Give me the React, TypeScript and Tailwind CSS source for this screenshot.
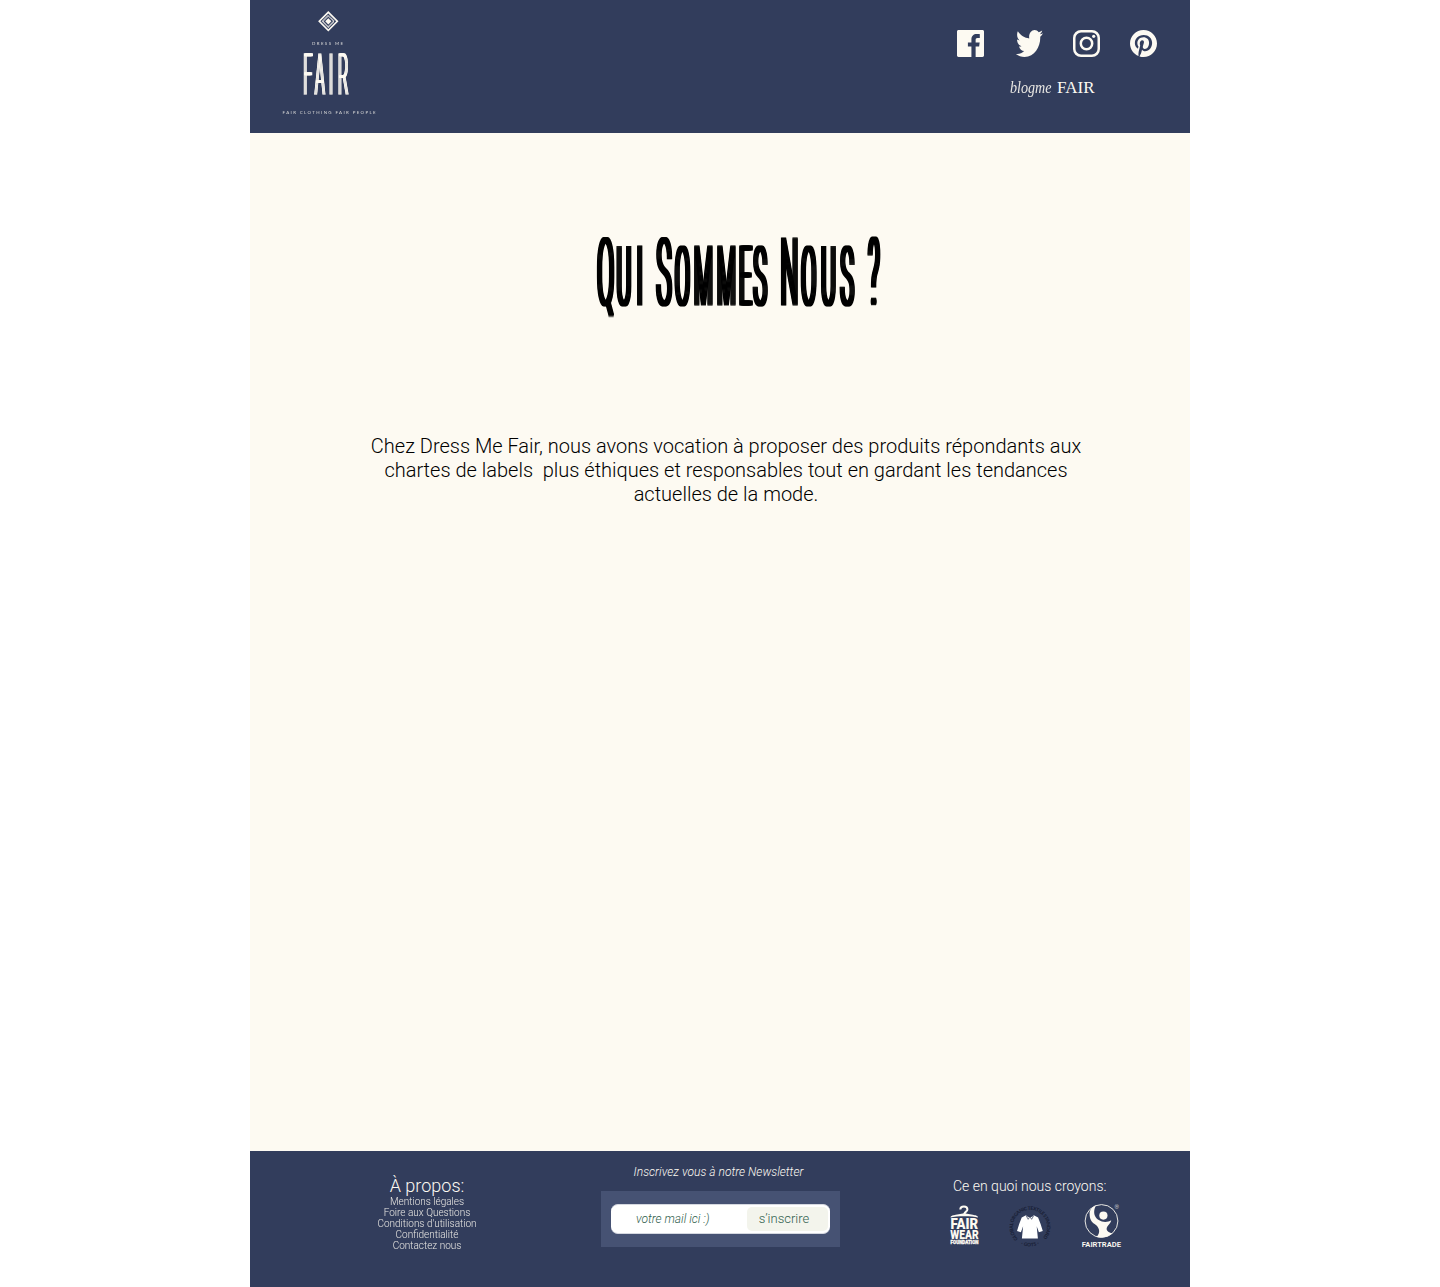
import type { ReactNode } from "react";
import { FaPinterest } from "react-icons/fa";

const LINKS = [
  "Mentions légales",
  "Foire aux Questions",
  "Conditions d'utilisation",
  "Confidentialité",
  "Contactez nous",
];

/* Narrow display lettering: thin glyphs squeezed horizontally, then widened by a horizontal smear. */
const SX = 0.26;
const at = (...xs: number[]) => xs.map((x) => (x / SX).toFixed(1)).join(" ");

function Title() {
  return (
    <h1 className="h-[90px] w-[300px]">
      <svg viewBox="0 0 300 90" className="size-full overflow-visible font-['Roboto'] font-thin uppercase">
        <filter id="smear" filterUnits="userSpaceOnUse" x="0" y="0" width="300" height="95">
          <feOffset in="SourceGraphic" dx="-2" result="a" />
          <feOffset in="SourceGraphic" dx="-1" result="b" />
          <feOffset in="SourceGraphic" dx="1" result="c" />
          <feOffset in="SourceGraphic" dx="2" result="d" />
          <feMerge>
            <feMergeNode in="a" />
            <feMergeNode in="b" />
            <feMergeNode in="SourceGraphic" />
            <feMergeNode in="c" />
            <feMergeNode in="d" />
          </feMerge>
        </filter>
        <g filter="url(#smear)">
          <text transform="translate(0 73.5) scale(0.26 1)" fill="#000" stroke="#000" strokeWidth="3">
            <tspan fontSize="91" x={at(8.7)}>Q</tspan>
            <tspan fontSize="80" x={at(28.1, 48.1)}>ui</tspan>
            <tspan fontSize="91" x={at(68)}>S</tspan>
            <tspan fontSize="80" x={at(86.5, 105.4, 128.4, 150.4, 165)}>ommes</tspan>
            <tspan fontSize="91" x={at(192.1)}>N</tspan>
            <tspan fontSize="80" x={at(212.8, 232.5, 252)}>ous</tspan>
            <tspan fontSize="91" x={at(279.7)}>?</tspan>
          </text>
        </g>
      </svg>
    </h1>
  );
}

function BrandLogo() {
  return (
    <svg viewBox="0 0 100 110" className="h-[110px] w-[100px] font-['Lato']" fill="#fdfaf2">
      <filter id="smear-small" filterUnits="userSpaceOnUse" x="0" y="40" width="100" height="55">
        <feOffset in="SourceGraphic" dx="-1" result="a" />
        <feOffset in="SourceGraphic" dx="1" result="b" />
        <feMerge>
          <feMergeNode in="a" />
          <feMergeNode in="SourceGraphic" />
          <feMergeNode in="b" />
        </feMerge>
      </filter>
      <g transform="translate(48.3 13.3) rotate(45)" stroke="#fdfaf2" fill="none">
        <rect x="-6.4" y="-6.4" width="12.8" height="12.8" strokeWidth="1.6" />
        <rect x="-4" y="-4" width="8" height="8" strokeWidth="1.4" strokeDasharray="1 0.4" />
        <rect x="-2.2" y="-2.2" width="4.4" height="4.4" fill="#fdfaf2" stroke="none" />
      </g>
      <text x="32" y="36.6" fontSize="4.4" textLength="31" opacity="0.8">DRESS ME</text>
      <g filter="url(#smear-small)">
        <text
          transform="translate(0 85.700) scale(0.28 1)"
          className="font-['Roboto'] font-thin"
          fontSize="55"
          stroke="#fdfaf2"
          strokeWidth="1.4"
          x="84 126 175 208"
        >
          FAIR
        </text>
      </g>
      <text x="2.6" y="106" fontSize="4.4" textLength="93" opacity="0.8">FAIR CLOTHING FAIR PEOPLE</text>
    </svg>
  );
}

function Facebook() {
  return (
    <svg viewBox="0 0 24 24" className="size-[27px]" fill="currentColor">
      <path d="M22.676 0H1.324C.593 0 0 .593 0 1.324v21.352C0 23.408.593 24 1.324 24h11.494v-9.294H9.689v-3.621h3.129V8.41c0-3.099 1.894-4.785 4.659-4.785 1.325 0 2.464.097 2.796.141v3.24h-1.921c-1.5 0-1.792.721-1.792 1.771v2.311h3.584l-.465 3.63H16.56V24h6.115c.733 0 1.325-.592 1.325-1.324V1.324C24 .593 23.408 0 22.676 0" />
    </svg>
  );
}

function Twitter() {
  return (
    <svg viewBox="0 2.2 24 19.6" preserveAspectRatio="none" className="size-[27px]" fill="currentColor">
      <path d="M23.954 4.569c-.885.389-1.83.654-2.825.775 1.014-.611 1.794-1.574 2.163-2.723-.951.555-2.005.959-3.127 1.184-.896-.959-2.173-1.559-3.591-1.559-2.717 0-4.92 2.203-4.92 4.917 0 .39.045.765.127 1.124C7.691 8.094 4.066 6.13 1.64 3.161c-.427.722-.666 1.561-.666 2.475 0 1.71.87 3.213 2.188 4.096-.807-.026-1.566-.248-2.228-.616v.061c0 2.385 1.693 4.374 3.946 4.827-.413.111-.849.171-1.296.171-.314 0-.615-.03-.916-.086.631 1.953 2.445 3.377 4.604 3.417-1.68 1.319-3.809 2.105-6.102 2.105-.39 0-.779-.023-1.17-.067 2.189 1.394 4.768 2.209 7.557 2.209 9.054 0 13.999-7.496 13.999-13.986 0-.209 0-.42-.015-.63.961-.689 1.8-1.56 2.46-2.548l-.047-.02z" />
    </svg>
  );
}

function Instagram() {
  return (
    <svg viewBox="0 0 27 27" className="size-[27px]" fill="none" stroke="currentColor" strokeWidth="2.5">
      <rect x="1.25" y="1.25" width="24.5" height="24.5" rx="6.8" />
      <circle cx="13.5" cy="13.5" r="5.7" />
      <circle cx="20.7" cy="6.3" r="1.6" fill="currentColor" stroke="none" />
    </svg>
  );
}

function FairWear() {
  return (
    <svg viewBox="0 0 30 40" className="h-[40px] w-[30px] overflow-visible font-['Roboto'] font-black" fill="#fdfaf2">
      <path d="M11.300 4.400c0-1.900 1.500-3 3.600-3s3.500 1.300 3.500 3c0 2.300-3.100 2.200-3.100 5" fill="none" stroke="#fdfaf2" strokeWidth="2" />
      <path d="M1.500 12.600c0-2 2.500-2.400 5.300-2.900l8.500-1.500 8.500 1.500c2.800.5 5.300.9 5.300 2.900-3-1-8-1.400-13.800-1.400s-10.800.4-13.800 1.400z" />
      <text x="1.600" y="24.200" fontSize="14.800" textLength="27.600" lengthAdjust="spacingAndGlyphs">FAIR</text>
      <text x="1.300" y="34.200" fontSize="12.200" textLength="28.400" lengthAdjust="spacingAndGlyphs">WEAR</text>
      <text x="1.600" y="38.700" fontSize="5" stroke="#fdfaf2" strokeWidth="0.300" textLength="27.800" lengthAdjust="spacingAndGlyphs">FOUNDATION</text>
    </svg>
  );
}

function Gots() {
  return (
    <svg viewBox="0 0 44 44" className="size-[44px] font-['Lato'] font-black">
      <defs>
        <path id="gots-top" d="M9.900 34.900A17 17 0 1 1 33.900 34.900" />
        <path id="gots-bottom" d="M11.900 39.800A20.500 20.500 0 0 0 31.900 39.800" />
      </defs>
      <g fill="#192036" fontSize="4.800">
        <text>
          <textPath href="#gots-top" textLength="78">GLOBAL ORGANIC TEXTILE STANDARD</textPath>
        </text>
        <text>
          <textPath href="#gots-bottom" startOffset="1" textLength="19">· GOTS ·</textPath>
        </text>
      </g>
      <path
        d="M18 11.300c1.800 2.600 6 2.600 7.800 0l4.300 2.200c1.700 4.300 3.400 8.800 4.700 13.500l-3.900 1.300-2.200-6 1.200 12.300H13.900l1.200-12.300-2.200 6-3.900-1.300c1.300-4.700 3-9.200 4.700-13.500z"
        fill="#fff"
      />
      <path d="M18.200 11.800l2 3.500 1.500-2.500M25.600 11.800l-2 3.500-1.500-2.500" fill="none" stroke="#323d5c" strokeWidth="0.700" />
    </svg>
  );
}

function Fairtrade() {
  return (
    <svg viewBox="0 0 42 44" className="h-[44px] w-[42px] overflow-visible font-['Roboto']" fill="#fdfaf2">
      <circle cx="21.500" cy="17" r="16.400" fill="none" stroke="#fdfaf2" strokeWidth="0.900" />
      <circle cx="23.400" cy="11.600" r="4.100" />
      <path d="M16 1.600C11.500 3.500 9.600 6.500 9.600 9.500c0 5.500 1.700 8.300 5 10.500 5 3.400 6.300 8.500 2 13 5.500 1.400 11.400.3 15.800-3.500-6.400-1.700-7-4.800-4.100-8.200 1.500-1.800 2.800-3 2.900-5-2.500 1.500-6 2.100-9.300 1.100-4.600-1.400-7.300-4.400-7.700-8.400-.2-2.700.5-5.200 1.800-7.400z" />
      <text x="34.500" y="5.200" fontSize="5.500">®</text>
      <text x="1.800" y="42.700" fontSize="8" fontWeight="600" textLength="39.200" lengthAdjust="spacingAndGlyphs">FAIRTRADE</text>
    </svg>
  );
}

function IconLink({ label, children }: { label: string; children: ReactNode }) {
  return (
    <a href="#" aria-label={label} className="block size-[27px]">
      {children}
    </a>
  );
}

export default function App() {
  return (
    <div className="flex min-h-[1287px] justify-center bg-white font-['Roboto',sans-serif]">
      <div className="flex w-[940px] flex-col bg-[#fdfaf2]">
        <header className="flex h-[133px] items-start justify-between bg-[#323d5c] pr-[33px] pl-[30px] text-[#fdfaf2]">
          <div className="pt-2">
            <BrandLogo />
          </div>
          <div className="w-[200px] pt-[30px]">
            <nav className="flex justify-between">
              <IconLink label="Facebook"><Facebook /></IconLink>
              <div className="flex w-[141px] justify-between">
                <IconLink label="Twitter"><Twitter /></IconLink>
                <IconLink label="Instagram"><Instagram /></IconLink>
                <IconLink label="Pinterest"><FaPinterest className="size-[27px]" viewBox="0 8 496 496" /></IconLink>
              </div>
            </nav>
            <p className="mt-[19px] ml-[53px] flex items-baseline font-['Liberation_Serif',serif] leading-[24px]">
              <span className="w-[47px] origin-left scale-x-[0.88] text-[16px] italic opacity-90">blogme</span>
              <span className="text-[17px]">FAIR</span>
            </p>
          </div>
        </header>

        <main className="flex flex-1 flex-col items-center">
          <div className="mt-[97px] ml-[38px]">
            <Title />
          </div>
          <p className="mt-[114px] ml-3 w-[730px] text-center text-[20px] leading-[24px] font-light text-black">
            Chez Dress Me Fair, nous avons vocation à proposer des produits répondants aux
            <br />
            chartes de labels&nbsp; plus éthiques et responsables tout en gardant les tendances
            <br />
            actuelles de la mode.
          </p>
        </main>

        <footer className="flex h-[136px] items-start bg-[#323d5c] font-light text-[#fdfaf2]">
          <section className="ml-[107px] w-[140px] pt-[24px] text-center">
            <h2 className="text-[18px] leading-[21px]">À propos:</h2>
            <ul className="text-[10px] leading-[11px] opacity-90">
              {LINKS.map((l) => (
                <li key={l}>{l}</li>
              ))}
            </ul>
          </section>

          <section className="ml-[104px] w-[239px] pt-[14px]">
            <h2 className="pr-[4px] text-center text-[12px] leading-[14px] tracking-[0.03px] italic">Inscrivez vous à notre Newsletter</h2>
            <form className="mt-3 h-[56px] bg-[#465273] px-[10px] pt-[13px]">
              <div className="flex h-[30px] items-center justify-between rounded-[7px] border-y border-[#d5d8e0] bg-white pr-[2px] pl-[25px] text-[#2f5e4c]">
                <span className="text-[12px] italic">votre mail ici :)</span>
                <button type="button" className="h-[24px] w-[81px] rounded-[5px] bg-[#f3f4ec] pr-[7px] text-[13px] font-light">
                  s’inscrire
                </button>
              </div>
            </form>
          </section>

          <section className="ml-[109px] w-[174px] pt-[27px]">
            <h2 className="ml-[4px] text-[14px] leading-[17px]">Ce en quoi nous croyons:</h2>
            <div className="mt-[9px] flex items-start">
              <div className="pt-[1px]"><FairWear /></div>
              <div className="ml-[29px]"><Gots /></div>
              <div className="ml-[28px]"><Fairtrade /></div>
            </div>
          </section>
        </footer>
      </div>
    </div>
  );
}
